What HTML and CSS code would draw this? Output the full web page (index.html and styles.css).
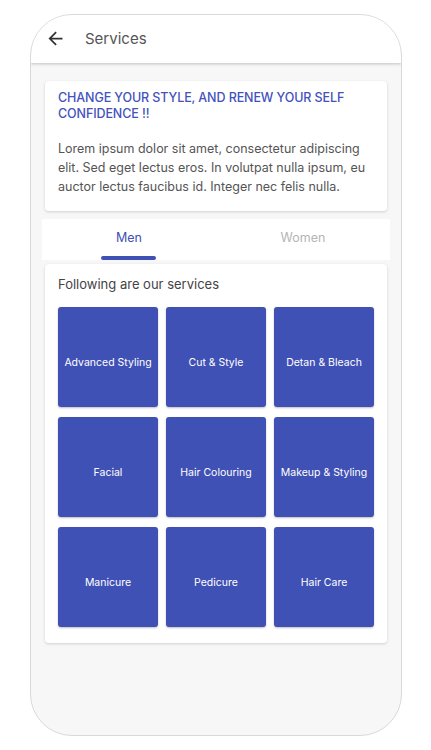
FILE: index.html
```html
<!DOCTYPE html>
<html>
<head>
<meta charset="utf-8">
<link rel="stylesheet" href="styles.css">
</head>
<body>
<div class="phone">
  <header class="appbar">
    <svg class="back" viewBox="0 0 24 24" width="21" height="21"><path d="M20 11H7.83l5.59-5.59L12 4l-8 8 8 8 1.41-1.41L7.83 13H20v-2z" fill="#333"/></svg>
    <span class="appbar-title">Services</span>
  </header>
  <main class="content">
    <section class="card intro">
      <h1 class="intro-title">CHANGE YOUR STYLE, AND RENEW YOUR SELF CONFIDENCE !!</h1>
      <p class="intro-text">Lorem ipsum dolor sit amet, consectetur adipiscing elit. Sed eget lectus eros. In volutpat nulla ipsum, eu auctor lectus faucibus id. Integer nec felis nulla.</p>
    </section>
    <nav class="tabs">
      <div class="tab active">Men<span class="indicator"></span></div>
      <div class="tab">Women</div>
    </nav>
    <section class="card services">
      <p class="services-label">Following are our services</p>
      <div class="grid">
        <div class="tile">Advanced Styling</div>
        <div class="tile">Cut &amp; Style</div>
        <div class="tile">Detan &amp; Bleach</div>
        <div class="tile">Facial</div>
        <div class="tile">Hair Colouring</div>
        <div class="tile">Makeup &amp; Styling</div>
        <div class="tile">Manicure</div>
        <div class="tile">Pedicure</div>
        <div class="tile">Hair Care</div>
      </div>
    </section>
  </main>
</div>
</body>
</html>
```
FILE: styles.css
```css
* { box-sizing: border-box; }
html, body { margin: 0; padding: 0; background: #fff; }
body { font-family: "Inter", "Open Sans", sans-serif; }

.phone {
  margin: 14px 0 0 30px;
  width: 372px;
  height: 722px;
  border: 1px solid #d9d9d9;
  border-radius: 42px;
  overflow: hidden;
  background: #f7f7f7;
  display: flex;
  flex-direction: column;
}

.appbar {
  height: 48px;
  flex: 0 0 48px;
  background: #fff;
  display: flex;
  align-items: center;
  padding-left: 14px;
  padding-bottom: 2px;
  box-shadow: 0 1px 3px rgba(0,0,0,0.22);
  position: relative;
  z-index: 1;
}
.back { display: block; }
.appbar-title {
  margin-left: 19px;
  font-size: 15px;
  color: #555;
}

.content {
  padding: 18px 14px 0;
  display: flex;
  flex-direction: column;
}

.card {
  background: #fff;
  border-radius: 4px;
  box-shadow: 0 1px 3px rgba(0,0,0,0.16);
}

.intro { padding: 9px 13px 14px; height: 130px; }
.intro-title {
  margin: 0;
  font-size: 12.5px;
  line-height: 16px;
  font-weight: 500;
  color: #4352bd;
  letter-spacing: -0.1px;
}
.intro-text {
  margin: 17px 0 0;
  font-size: 12.5px;
  line-height: 19px;
  color: #555;
}

.tabs {
  margin: 8px -3px 0;
  height: 41px;
  background: #fff;
  display: flex;
}
.tab {
  flex: 1;
  display: flex;
  align-items: center;
  justify-content: center;
  font-size: 12.5px;
  color: #b5b5b5;
  position: relative;
  padding-bottom: 5px;
}
.tab.active { color: #3f51b5; }
.indicator {
  position: absolute;
  bottom: 0;
  left: 50%;
  width: 55px;
  margin-left: -28px;
  height: 4px;
  border-radius: 2px;
  background: #3f51b5;
}

.services {
  margin-top: 4px;
  padding: 12px 13px 16px;
}
.services-label {
  margin: 0 0 15px;
  font-size: 13px;
  line-height: 16px;
  color: #444;
}
.grid {
  display: grid;
  grid-template-columns: repeat(3, 100px);
  grid-auto-rows: 100px;
  column-gap: 8px;
  row-gap: 10px;
}
.tile {
  background: #3f51b5;
  border-radius: 3px;
  box-shadow: 0 1px 2px rgba(0,0,0,0.25);
  color: #fff;
  font-size: 10.5px;
  display: flex;
  align-items: center;
  justify-content: center;
  text-align: center;
  padding-top: 10px;
}
```
